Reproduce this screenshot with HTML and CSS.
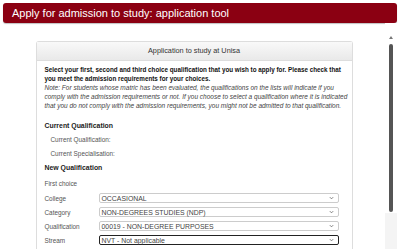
FILE: index.html
```html
<!DOCTYPE html>
<html lang="en">
<head>
<meta charset="utf-8"/>
<title>Apply for admission to study</title>
<link rel="stylesheet" href="styles.css">
</head>
<body>
<div class="banner">Apply for admission to study: application tool</div>

<div class="frame">
  <div class="content">
    <div class="panel">
      <div class="panel-head">Application to study at Unisa</div>
      <div class="panel-body">
        <p class="intro">
          <strong>Select your first, second and third choice qualification that you wish to apply for. Please check that<br>
          you meet the admission requirements for your choices.</strong><br>
          <em>Note: For students whose matric has been evaluated, the qualifications on the lists will indicate if you<br>
          comply with the admission requirements or not. If you choose to select a qualification where it is indicated<br>
          that you do not comply with the admission requirements, you might not be admitted to that qualification.</em>
        </p>

        <div class="section">Current Qualification</div>
        <div class="field">Current Qualification:</div>
        <div class="field">Current Specialisation:</div>

        <div class="section">New Qualification</div>
        <div class="choice">First choice</div>

        <div class="row">
          <span class="label">College</span>
          <div class="select">OCCASIONAL<svg class="chev" viewBox="0 0 6 4"><path d="M1 1 L3 3 L5 1"/></svg></div>
        </div>
        <div class="row">
          <span class="label">Category</span>
          <div class="select">NON-DEGREES STUDIES (NDP)<svg class="chev" viewBox="0 0 6 4"><path d="M1 1 L3 3 L5 1"/></svg></div>
        </div>
        <div class="row">
          <span class="label">Qualification</span>
          <div class="select">00019 - NON-DEGREE PURPOSES<svg class="chev" viewBox="0 0 6 4"><path d="M1 1 L3 3 L5 1"/></svg></div>
        </div>
        <div class="row">
          <span class="label">Stream</span>
          <div class="select focused">NVT - Not applicable<svg class="chev" viewBox="0 0 6 4"><path d="M1 1 L3 3 L5 1"/></svg></div>
        </div>
      </div>
    </div>
  </div>

  <div class="scrollbar">
    <div class="arrow"></div>
    <div class="thumb"></div>
  </div>
</div>
</body>
</html>
```

FILE: styles.css
```css
body {
    margin: 0;
    background: #ffffff;
    font-family: "Liberation Sans", Arial, sans-serif;
    color: #222222;
}

.banner {
    margin: 3px 3px 0;
    height: 20px;
    line-height: 20px;
    padding-left: 9px;
    background: #8b0012;
    border-radius: 3px;
    color: #ffffff;
    font-size: 11px;
    box-shadow: 0 1px 1px rgba(0, 0, 0, 0.25);
}

.frame {
    display: flex;
    margin: 0 3px;
    height: 226px;
    overflow: hidden;
}

.content {
    flex: 1;
    padding-top: 18px;
}

/* panel */
.panel {
    width: 315px;
    margin: 0 auto;
    border: 1px solid #dddddd;
    border-bottom: none;
    border-radius: 3px 3px 0 0;
    height: 300px;
}

.panel-head {
    height: 18px;
    line-height: 18px;
    text-align: center;
    font-size: 7.3px;
    color: #333333;
    background: linear-gradient(#f9f9f9, #e9e9e9);
    border-bottom: 1px solid #dddddd;
}

.panel-body {
    padding: 4px 13px 0 8px;
}

.intro {
    margin: 0 0 9px;
    font-size: 6.5px;
    line-height: 9px;
    white-space: nowrap;
    color: #111111;
}

.intro strong {
    font-size: 6.3px;
}

.intro em {
    color: #444444;
}

.section {
    height: 14px;
    line-height: 14px;
    font-size: 6.9px;
    font-weight: bold;
}

.field {
    height: 14px;
    line-height: 14px;
    font-size: 6.4px;
    padding-left: 6px;
    color: #555555;
}

.choice {
    height: 14px;
    line-height: 14px;
    margin-top: 2px;
    font-size: 6.4px;
    color: #555555;
}

.row {
    display: flex;
    align-items: center;
    height: 14px;
}

.label {
    width: 54px;
    font-size: 6.4px;
    color: #555555;
}

.select {
    flex: 1;
    display: flex;
    align-items: center;
    justify-content: space-between;
    height: 8px;
    padding: 0 4px 0 2px;
    border: 1px solid #cccccc;
    border-radius: 2px;
    font-size: 6.9px;
    color: #444444;
}

.select.focused {
    border-color: #222222;
}

.chev {
    width: 5px;
    height: 4px;
    fill: none;
    stroke: #666666;
    stroke-width: 1;
}

/* scrollbar */
.scrollbar {
    width: 12px;
    display: flex;
    flex-direction: column;
    align-items: center;
    padding-top: 13px;
    background: linear-gradient(#ffffff 190px, #f4f4f4 190px);
}

.arrow {
    width: 0;
    height: 0;
    border-left: 2px solid transparent;
    border-right: 2px solid transparent;
    border-bottom: 3px solid #777777;
}

.thumb {
    margin-top: 5px;
    width: 4px;
    height: 168px;
    border-radius: 2px;
    background: #555555;
}
```
